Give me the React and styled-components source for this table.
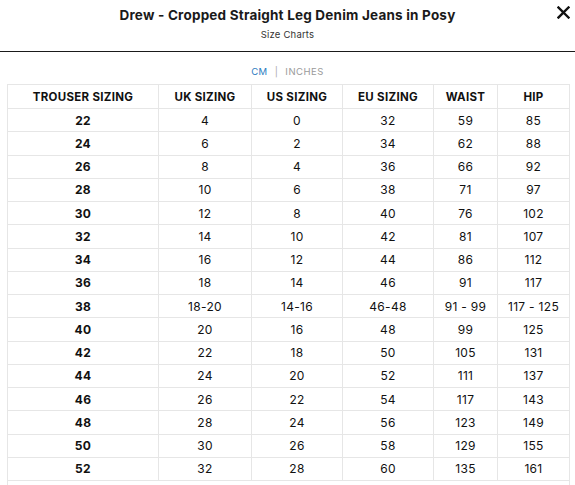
import React from "react";
import styled, { createGlobalStyle } from "styled-components";

const rows = [
  ["22", "4", "0", "32", "59", "85"],
  ["24", "6", "2", "34", "62", "88"],
  ["26", "8", "4", "36", "66", "92"],
  ["28", "10", "6", "38", "71", "97"],
  ["30", "12", "8", "40", "76", "102"],
  ["32", "14", "10", "42", "81", "107"],
  ["34", "16", "12", "44", "86", "112"],
  ["36", "18", "14", "46", "91", "117"],
  ["38", "18-20", "14-16", "46-48", "91 - 99", "117 - 125"],
  ["40", "20", "16", "48", "99", "125"],
  ["42", "22", "18", "50", "105", "131"],
  ["44", "24", "20", "52", "111", "137"],
  ["46", "26", "22", "54", "117", "143"],
  ["48", "28", "24", "56", "123", "149"],
  ["50", "30", "26", "58", "129", "155"],
  ["52", "32", "28", "60", "135", "161"],
];

const headings = ["Trouser Sizing", "UK Sizing", "US Sizing", "EU Sizing", "Waist", "Hip"];
const widths = [151, 93, 91, 91, 64, 72];

export default function App() {
  return (
    <>
      <GlobalStyle />
      <Modal>
        <Header>
          <Title>Drew - Cropped Straight Leg Denim Jeans in Posy</Title>
          <Subtitle>Size Charts</Subtitle>
          <Close aria-label="Close">
            <svg width="13" height="13" viewBox="0 0 13 13">
              <path d="M1.5 1.5 L11.5 11.5 M11.5 1.5 L1.5 11.5" stroke="#111" strokeWidth="2.4" strokeLinecap="square" />
            </svg>
          </Close>
        </Header>
        <Units>
          <Unit active>CM</Unit>
          <Pipe>|</Pipe>
          <Unit>INCHES</Unit>
        </Units>
        <Table>
          <colgroup>
            {widths.map((w, i) => (
              <col key={i} style={{ width: w }} />
            ))}
          </colgroup>
          <thead>
            <tr>
              {headings.map((h) => (
                <Th key={h}>{h}</Th>
              ))}
            </tr>
          </thead>
          <tbody>
            {rows.map((r) => (
              <tr key={r[0]}>
                {r.map((c, i) => (
                  <Td key={i} bold={i === 0}>
                    {c}
                  </Td>
                ))}
              </tr>
            ))}
            <tr>
              <Td colSpan={6} />
            </tr>
          </tbody>
        </Table>
      </Modal>
    </>
  );
}

const GlobalStyle = createGlobalStyle`
  body {
    margin: 0;
    background: #fff;
    font-family: "Inter", "Open Sans", sans-serif;
    color: #111;
  }
`;

const Modal = styled.div`
  width: 575px;
  height: 485px;
  overflow: hidden;
  background: #fff;
`;

const Header = styled.div`
  position: relative;
  display: flex;
  flex-direction: column;
  align-items: center;
  padding: 5px 0 0;
  height: 46px;
  border-bottom: 1px solid #1a1a1a;
`;

const Title = styled.h1`
  margin: 0;
  font-size: 13.5px;
  line-height: 20px;
  font-weight: 700;
  letter-spacing: 0.2px;
  color: #1a1a1a;
`;

const Subtitle = styled.div`
  margin-top: 3px;
  font-size: 9.5px;
  line-height: 14px;
  letter-spacing: 0.2px;
  color: #333;
`;

const Close = styled.button`
  position: absolute;
  top: 6px;
  right: 5px;
  border: 0;
  background: none;
  padding: 0;
  width: 13px;
  height: 13px;
  display: flex;
`;

const Units = styled.div`
  display: flex;
  justify-content: center;
  align-items: center;
  gap: 7px;
  margin-top: 12px;
  height: 14px;
  font-size: 9.5px;
  letter-spacing: 0.5px;
`;

const Unit = styled.span`
  color: ${(p) => (p.active ? "#2b7bbf" : "#9a9a9a")};
`;

const Pipe = styled.span`
  color: #aaa;
`;

const Table = styled.table`
  margin: 6px 0 0 7px;
  width: 563px;
  table-layout: fixed;
  border-collapse: collapse;
  border: 1px solid #e6e6e6;
`;

const Th = styled.th`
  height: 23px;
  padding: 0;
  border: 1px solid #e6e6e6;
  font-size: 11.5px;
  font-weight: 700;
  letter-spacing: 0.3px;
  text-transform: uppercase;
  text-align: center;
  color: #111;
`;

const Td = styled.td`
  height: 22.25px;
  padding: 0;
  border: 1px solid #e6e6e6;
  font-size: 12px;
  font-weight: ${(p) => (p.bold ? 700 : 400)};
  letter-spacing: 0.3px;
  text-align: center;
  color: #111;
`;
